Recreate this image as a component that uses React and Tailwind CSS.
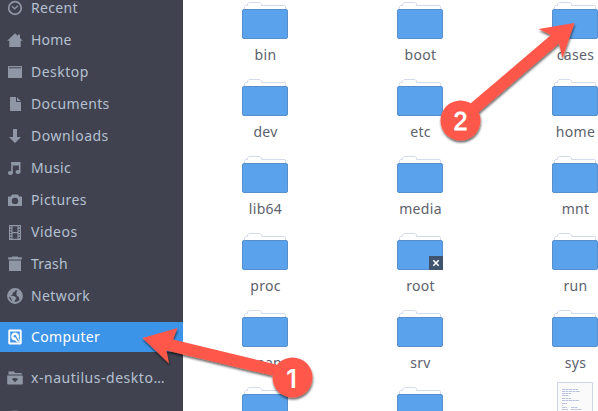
import React from "react";

const iconPaths = {
  recent: (
    <g fill="none" stroke="currentColor">
      <circle cx="8" cy="8" r="6.3" strokeWidth="1.7" />
      <path d="M5 6.2 7.6 8.8 11 5.7" strokeWidth="1.3" />
    </g>
  ),
  home: <path d="M8 1.2 11 4V2.6h2V6l2.8 2.7H13.7V15H2.300V8.700H.2Z" />,
  desktop: (
    <path fillRule="evenodd" d="M1.500 2h13l.5.5v11l-.5.5h-13l-.5-.5v-11ZM2 3.200v1h12v-1Z" />
  ),
  documents: (
    <g>
      <path d="M3 1h6v5h5v9H3Z" />
      <path d="M10 1.200 13.800 5H10Z" />
    </g>
  ),
  downloads: <path d="M6 1h4v8h4l-6 6-6-6h4Z" />,
  music: (
    <g>
      <path d="M4.200 2h9.300v10.200h-1.600V5.500H5.800v7.700H4.200Z" />
      <ellipse cx="3.400" cy="13" rx="2.500" ry="1.900" />
      <ellipse cx="11" cy="12" rx="2.500" ry="1.900" />
    </g>
  ),
  pictures: (
    <path
      fillRule="evenodd"
      d="M5 2.500h6l1 2h2.500l.5.500v8.500l-.5.500h-13l-.5-.5V5l.5-.5H4ZM8 5.700a3.200 3.200 0 1 0 0 6.400 3.200 3.200 0 0 0 0-6.400Z"
    />
  ),
  videos: (
    <path
      fillRule="evenodd"
      d="M2 1h12v15H2ZM5.500 2.200V8h5V2.200ZM5.500 9.200v5.600h5V9.200ZM3 2.200v1.300h1.400V2.200Zm0 2.700v1.300h1.400V4.900Zm0 2.700v1.300h1.400V7.600Zm0 2.700v1.300h1.400v-1.300Zm0 2.700v1.300h1.400V13ZM11.600 2.200v1.300H13V2.200Zm0 2.700v1.300H13V4.900Zm0 2.700v1.300H13V7.600Zm0 2.700v1.300H13v-1.300Zm0 2.700v1.300H13V13Z"
    />
  ),
  trash: <path d="M5 1.200V.5h6v.7h3.800v2.300H1.200V1.200ZM2 4.500h12V15H2Z" />,
  network: (
    <g>
      <circle cx="8" cy="8" r="7" fill="none" stroke="currentColor" strokeWidth="1.800" />
      <path d="M1.500 6 4.500 1.500l4.500-.5-1 2.500-2 1-.5 2-2 1.200 3.500.3 2.500 2-1.300 2-1 3L5 13 3.700 9.500 1.500 8.500ZM10 3l3-.5 2 4.500-.8 4-1.700 1-.7-3L10 8l-.7-2Z" />
    </g>
  ),
  computer: (
    <g>
      <path fillRule="evenodd" d="M2.200.5h11.600l.9.900v13.200l-.9.900H2.200l-.9-.9V1.400ZM3.200 2.400v11.200h9.600V2.400Z" />
      <path d="M8 3.400a4 4 0 0 1 3.600 5.800l1 1.500v2.800h-2.500L8.500 11.400A4 4 0 1 1 8 3.400Z" />
      <g fill="#3c94e8">
        <circle cx="8" cy="7.300" r="1.300" />
        <path d="m8.400 8.300 1.300-.3 2.300 4-1 .6Z" />
      </g>
    </g>
  ),
  remote: (
    <path
      fillRule="evenodd"
      d="M1.500 1.500H7L8 3h6.800v1.500H1.500ZM.2 5.500h15.600v8.300l-.7.700H.9l-.7-.7ZM4.900 9 8 12.200 11.100 9C9.500 7.500 6.500 7.500 4.900 9Z"
    />
  ),
};

const places = [
  ["recent", "Recent", "tracking-[0.35px]"],
  ["home", "Home", "tracking-[0.2px]"],
  ["desktop", "Desktop", "tracking-[0.5px]"],
  ["documents", "Documents", "tracking-[0.35px]"],
  ["downloads", "Downloads", "tracking-[0.5px]"],
  ["music", "Music", "tracking-[0.35px]"],
  ["pictures", "Pictures", "tracking-[0.4px]"],
  ["videos", "Videos", "tracking-[0.5px]"],
  ["trash", "Trash", "tracking-[0.2px]"],
  ["network", "Network", "tracking-[0.4px]"],
];

function PlaceIcon({ name }) {
  return (
    <svg viewBox="0 0 16 16" fill="currentColor" className="h-4 w-4 shrink-0 overflow-visible">
      {iconPaths[name]}
    </svg>
  );
}

function Place({ icon, label, tracking }) {
  return (
    <div className="flex h-8 shrink-0 items-center gap-2 pl-[7px] text-[#8f97a6]">
      <PlaceIcon name={icon} />
      <span className={`whitespace-nowrap text-[#b5c0d1] ${tracking}`}>{label}</span>
    </div>
  );
}

function Folder({ locked }) {
  return (
    <svg viewBox="0 0 47 40" className="h-10 w-[47px] shrink-0">
      <path
        d="M3.500 10V6.500l1-1h2V4L8 2.500h11L20.500 4v1.500H44l.5 1V10"
        fill="#fff"
        stroke="#d5dbeb"
      />
      <rect x="1.500" y="9.500" width="45" height="29" rx="1.500" fill="#5aa2ec" stroke="#568fcb" />
      {locked && (
        <g>
          <rect x="33" y="25" width="14" height="14" fill="#40536f" />
          <path d="m37.300 29.300 5.400 5.400m0-5.400-5.400 5.400" stroke="#fff" strokeWidth="1.600" />
        </g>
      )}
    </svg>
  );
}

const snippet = [
  [5, 7, 16], [5, 9, 18], [5, 11, 9], [5, 13, 7], [5, 16, 9], [5, 18, 17],
  [5, 21, 5], [5, 23, 1], [5, 25, 5], [14, 25, 7], [5, 27, 6], [14, 27, 11],
];

function TextFile() {
  return (
    <svg viewBox="0 0 47 40" className="h-10 w-[47px] shrink-0 overflow-visible">
      <rect x="6.500" y="-2.500" width="35" height="44" fill="#fafafb" stroke="#cfd6e8" />
      {snippet.map(([x, y, w], i) => (
        <path key={i} d={`M${x + 6} ${y - 2.500}h${w}`} stroke="#b9c3df" strokeDasharray="3 .5" />
      ))}
    </svg>
  );
}

const files = [
  "bin", "boot", "cases", "dev", "etc", "home", "lib64", "media", "mnt",
  "proc", "root", "run", "snap", "srv", "sys",
];

function Annotations() {
  return (
    <svg viewBox="0 0 598 411" className="pointer-events-none absolute inset-0 h-[411px] w-[598px]">
      <defs>
        <filter id="shadow" x="-20%" y="-20%" width="140%" height="150%">
          <feDropShadow dx="0.500" dy="2" stdDeviation="1.300" floodColor="#000" floodOpacity="0.600" />
        </filter>
      </defs>
      <g fill="#ff594c">
        <path filter="url(#shadow)" d="M142.500 338 177.500 328 173 339.500 278 365 272 375.500 166.500 350.500 169 363.500Z" />
        <circle filter="url(#shadow)" cx="292.500" cy="377.500" r="20" />
        <path filter="url(#shadow)" d="M574.500 23 538.500 29 551 35 470.500 103.500 478.500 112.500 559 43.500 562.500 58Z" />
        <circle filter="url(#shadow)" cx="460.500" cy="120.500" r="20" />
      </g>
      <g fill="#fff" textAnchor="middle">
        <text x="291.500" y="387.500" className="font-['Inter',sans-serif] text-[25px] font-semibold">1</text>
        <text x="460.500" y="130" stroke="#fff" strokeWidth="0.900" className="font-['Liberation_Sans',sans-serif] text-[25px]">2</text>
      </g>
    </svg>
  );
}

export default function App() {
  return (
    <div className="relative flex h-[411px] w-[598px] overflow-hidden bg-white font-['Noto_Sans',sans-serif] text-[14px] leading-5">
      <aside className="flex w-[183px] shrink-0 flex-col overflow-hidden bg-[#40434f]">
        <div className="-mt-2 flex flex-col pb-[10px]">
          {places.map(([icon, label, tracking]) => (
            <Place key={icon} icon={icon} label={label} tracking={tracking} />
          ))}
        </div>
        <div className="flex h-[30px] shrink-0 items-center gap-2 bg-[#3c94e8] pl-[7px] text-white">
          <PlaceIcon name="computer" />
          <span className="tracking-[0.35px]">Computer</span>
        </div>
        <div className="flex flex-col pt-[10px]">
          <Place icon="remote" label="x-nautilus-deskto…" tracking="tracking-[0.53px]" />
          <div className="ml-[10px] mt-4 h-4 w-[10px] rounded-sm bg-[#5b5f6c]" />
        </div>
      </aside>
      <main className="h-[411px] min-w-0 flex-1 overflow-hidden pl-1">
        <div className="grid w-[465px] grid-cols-3 auto-rows-[77px]">
          {files.map((name) => (
            <div key={name} className="flex flex-col items-center">
              <Folder locked={name === "root"} />
              <span className="mt-[5px] pl-[2px] tracking-[0.3px] text-[#5c616c]">{name}</span>
            </div>
          ))}
          <div className="flex justify-center"><Folder /></div>
          <div className="flex justify-center"><Folder /></div>
          <div className="flex justify-center"><TextFile /></div>
        </div>
      </main>
      <Annotations />
    </div>
  );
}
